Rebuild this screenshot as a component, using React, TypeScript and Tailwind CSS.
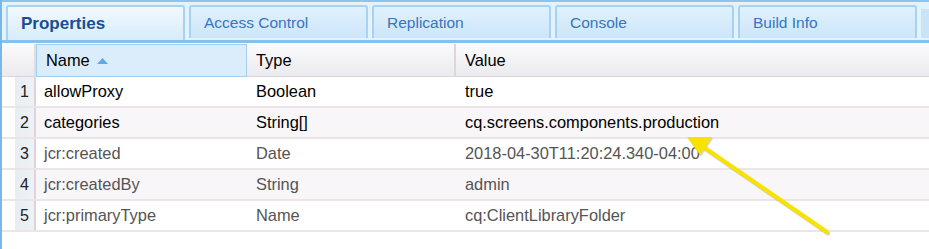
import { Fragment } from "react";

const tabs = ["Properties", "Access Control", "Replication", "Console", "Build Info"];

const rows = [
  { n: 1, name: "allowProxy", type: "Boolean", value: "true", dim: false },
  { n: 2, name: "categories", type: "String[]", value: "cq.screens.components.production", dim: false },
  { n: 3, name: "jcr:created", type: "Date", value: "2018-04-30T11:20:24.340-04:00", dim: true },
  { n: 4, name: "jcr:createdBy", type: "String", value: "admin", dim: true },
  { n: 5, name: "jcr:primaryType", type: "Name", value: "cq:ClientLibraryFolder", dim: true },
];

const App = () => {
  return (
    <div
      className="relative w-[929px] h-[249px] overflow-hidden bg-white border-l-2 border-[#7ab7e8]"
      style={{ fontFamily: '"Liberation Sans", Arial, sans-serif' }}
    >
      {/* tab strip */}
      <div className="border-t-2 border-[#8cc4ee] bg-[#e4f2fc] pt-[3px] border-b-[3px] border-b-[#86c0ec]">
        <div className="flex gap-[4px] pl-[4px]">
          {tabs.map((t, i) => (
            <div
              key={t}
              className={`w-[179px] h-[33px] flex items-center pl-[13px] rounded-t-[3px] border-2 border-b-0 border-[#a7d2f1] ${
                i === 0
                  ? "bg-gradient-to-b from-[#f2f9fe] to-[#d7ecfb] text-[#174f93] font-bold text-[17px] h-[35px] -mb-[2px]"
                  : "bg-gradient-to-b from-[#e0f1fd] to-[#cde6f9] text-[#3775bd] text-[15.5px] mb-[2px]"
              }`}
            >
              {t}
            </div>
          ))}
          <div className="flex-1 bg-[#c9e3f8] mt-[4px] mb-[2px]" />
        </div>
      </div>

      {/* grid */}
      <div className="grid grid-cols-[34px_211px_209px_1fr] mt-px text-[16.4px]">
        <div className="h-[33px] bg-gradient-to-b from-[#fbfafb] to-[#ebeaee] border-r-2 border-[#e4dde0] border-b border-b-[#dcd4d8]" />
        <div className="h-[33px] bg-[#dbedfb] border border-[#a3cff1] flex items-center pl-[9px] text-black gap-[7px]">
          Name
          <svg width="11" height="6" viewBox="0 0 11 6">
            <polygon points="0,6 5.5,0 11,6" fill="#63a9e1" />
          </svg>
        </div>
        <div className="h-[33px] bg-gradient-to-b from-[#fbfafb] to-[#ebeaee] border-r-2 border-[#e0d6da] border-b border-b-[#dcd4d8] flex items-center pl-[9px] text-black">
          Type
        </div>
        <div className="h-[33px] bg-gradient-to-b from-[#fbfafb] to-[#ebeaee] border-b border-b-[#dcd4d8] flex items-center pl-[9px] text-black">
          Value
        </div>

        {rows.map((r) => {
          const bg = r.n % 2 === 0 ? "bg-[#f8f6f8]" : "bg-white";
          const color = r.dim ? "text-[#545454]" : "text-black";
          return (
            <Fragment key={r.n}>
              <div className="h-[31px] flex border-b-2 border-[#ebe5e8] bg-white">
                <div className="w-[13px]" />
                <div className="flex-1 bg-gradient-to-r from-[#e7edf3] to-[#eef2f6] border-r-2 border-[#e2d1d6] flex items-center justify-center text-[16px] text-[#222]">
                  {r.n}
                </div>
              </div>
              <div className={`h-[31px] ${bg} ${color} border-b-2 border-[#ebe5e8] flex items-center pl-[8px]`}>
                {r.name}
              </div>
              <div className={`h-[31px] ${bg} ${color} border-b-2 border-[#ebe5e8] flex items-center pl-[9px]`}>
                {r.type}
              </div>
              <div className={`h-[31px] ${bg} ${color} border-b-2 border-[#ebe5e8] flex items-center pl-[9px]`}>
                {r.value}
              </div>
            </Fragment>
          );
        })}
      </div>

      {/* annotation arrow */}
      <svg className="absolute left-[-2px] top-0 pointer-events-none" width="929" height="249" viewBox="0 0 929 249">
        <g transform="translate(1,1.5)" opacity="0.25">
          <line x1="827" y1="232" x2="702" y2="146" stroke="#555" strokeWidth="4" strokeLinecap="round" />
          <polygon points="687,137 712,137 700,155" fill="#555" />
        </g>
        <line x1="827" y1="232" x2="702" y2="146" stroke="#f7e200" strokeWidth="4" strokeLinecap="round" />
        <polygon points="687,137 712,137 700,155" fill="#f7e200" />
      </svg>
    </div>
  );
};

export default App;
